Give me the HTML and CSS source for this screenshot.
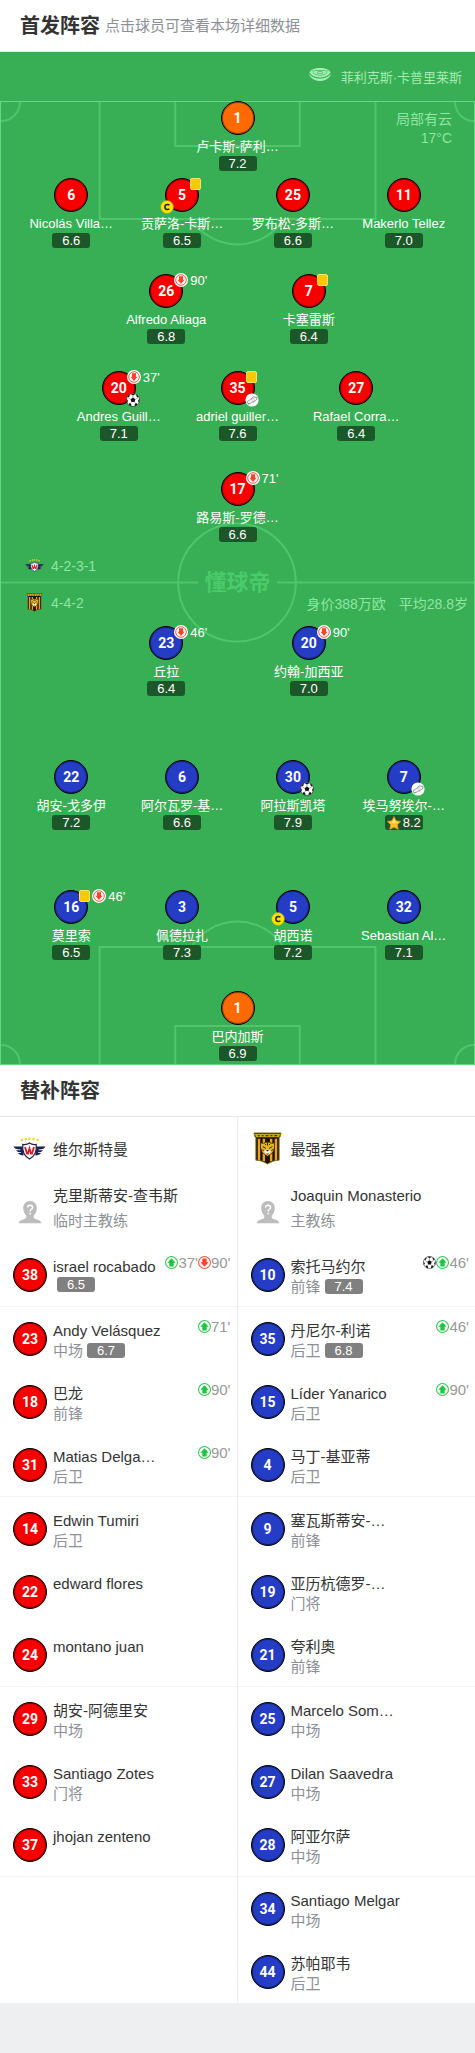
FILE: index.html
```html
<!DOCTYPE html>
<html lang="zh-CN">
<head>
    <meta charset="UTF-8">
    <meta name="viewport" content="width=device-width, initial-scale=1.0">
    <title>首发阵容</title>
    <link rel="stylesheet" href="styles.css">
</head>
<body>
    <svg class="sprite" aria-hidden="true">
        <symbol id="down" viewBox="0 0 14 14">
            <circle cx="7" cy="7" r="7" fill="#fff"/>
            <circle cx="7" cy="7" r="5.3" fill="none" stroke="#f5442d" stroke-width="0.9"/>
            <path d="M5 3.200h4v3.600h1.500L7 11 3.500 6.800H5z" fill="#f5442d"/>
        </symbol>
        <symbol id="sub-down" viewBox="0 0 12 12">
            <circle cx="6" cy="6" r="5.5" fill="#fff" stroke="#f2543f" stroke-width="1"/>
            <path d="M4 2.200h4v3.600h1.800L6 10 2.200 5.800H4z" fill="#f5442d"/>
        </symbol>
        <symbol id="sub-up" viewBox="0 0 12 12">
            <circle cx="6" cy="6" r="5.5" fill="#fff" stroke="#35c457" stroke-width="1"/>
            <path d="M4 9.800h4V6.200h1.800L6 2 2.200 6.200H4z" fill="#1fc43f"/>
        </symbol>
        <symbol id="ball" viewBox="0 0 14 14">
            <circle cx="7" cy="7" r="6.5" fill="#fff" stroke="#333" stroke-width="0.7"/>
            <path d="M7 4.500l2.400 1.800-.9 2.800h-3l-.9-2.800zM4.700.9h4.600L7 2.500zM.6 5.600L2 8.100.9 9.600zM13.400 5.600L12 8.100l1.100 1.500zM3 10.200l2 .3.500 2.700-2.500-1.200zM11 10.200l-2 .3-.5 2.700 2.500-1.200zM1.600 3.200l1.800-1.600.3 1.600-1.400 1.400zM12.400 3.200l-1.800-1.600-.3 1.600 1.400 1.400z" fill="#111"/>
            <path d="M7 2.500v2M4.600 6.300L2.300 4.800M9.400 6.300l2.300-1.500M5.500 9.100l-1 1.400M8.500 9.100l1 1.400" stroke="#444" stroke-width="0.5"/>
        </symbol>
        <symbol id="boot" viewBox="0 0 14 14">
            <circle cx="7" cy="7" r="6.6" fill="#fff"/>
            <path d="M2 9.600c.6-1.800 2.200-2 3.600-3.200C7 5.200 7.500 3.900 9 3.600c.8 1 1.700.9 2.700.4.7 1.500.3 2.700-1 3.500C8.900 8.300 7.700 8.600 6.400 9.700c-1.500 1.200-3.600 1.300-4.400-.1z" fill="#f2f2f2" stroke="#777" stroke-width="0.8"/>
            <path d="M6.400 6.300l1 1M7.500 5.200l1 1M3.500 11.300l.4.700M8.500 9.300l.4.800" stroke="#777" stroke-width="0.7"/>
        </symbol>
        <symbol id="captain" viewBox="0 0 14 14">
            <circle cx="7" cy="7" r="6.4" fill="#ffe400" stroke="#a9a111" stroke-width="0.6"/>
            <path d="M9.400 5.300C8.900 4.800 8.200 4.500 7.400 4.500 5.900 4.500 4.900 5.600 4.900 7s1 2.500 2.500 2.500c.8 0 1.500-.3 2-.8" fill="none" stroke="#222" stroke-width="1.500"/>
        </symbol>
        <symbol id="star" viewBox="0 0 14 14">
            <path d="M7 .5l2.100 4.200 4.600.7-3.300 3.300.8 4.700L7 11.200l-4.200 2.200.8-4.700L.3 5.400l4.600-.7z" fill="#ffc125" stroke="#f58f1d" stroke-width="0.6" stroke-linejoin="round"/>
            <path d="M7 2.200l1.500 3.200 3.400.5L7 7.500 2.100 5.900l3.400-.5z" fill="#ffe06b"/>
        </symbol>
        <symbol id="coach" viewBox="0 0 24 24">
            <path d="M12 1c4.200 0 6.800 3 6.800 7 0 3-1.200 5.700-3 7.400-.6 2.600.6 3.300 3.200 4.200 2.200.7 3.800 1.300 4.500 3.600H.5c.7-2.300 2.300-2.900 4.500-3.600 2.600-.9 3.800-1.600 3.200-4.200-1.800-1.700-3-4.400-3-7.400 0-4 2.600-7 6.800-7z" fill="#bdbdbd"/>
            <path d="M9.600 7.600c0-1.500 1-2.400 2.500-2.400s2.500.9 2.500 2.200c0 1.900-2.500 2-2.500 4.100" fill="none" stroke="#fff" stroke-width="1.400"/>
            <circle cx="12.100" cy="13.600" r="0.9" fill="#fff"/>
        </symbol>
        <symbol id="wilstermann" viewBox="0 0 33 22">
            <g fill="#f6d433"><circle cx="9" cy="2.600" r="1.300"/><circle cx="13" cy="1.600" r="1.300"/><circle cx="16.500" cy="1.300" r="1.300"/><circle cx="20.500" cy="1.600" r="1.300"/><circle cx="24.500" cy="2.600" r="1.300"/></g>
            <path d="M.5 9h10v9C8 18 5.800 17 5 15.500h3L8 14.800C5.500 14.800 3.500 13.800 3 12.700h4.500V12C3.500 12 1.200 11 .5 9zM32.500 9h-10v9c2.500 0 4.700-1 5.500-2.500h-3v-.7c2.500 0 4.500-1 5-2.100h-4.500V12c4 0 6.300-1 7-3z" fill="#1d2150"/>
            <path d="M16.500 5.500c2 1.500 4.500 1.800 6.700 1.400.8 7-1.700 12-6.700 14.600-5-2.600-7.500-7.600-6.700-14.600 2.200.4 4.700.1 6.700-1.400z" fill="#fff" stroke="#1d2150" stroke-width="1.200"/>
            <path d="M12 9.500l2 6.500h1l1.500-5 1.500 5h1l2-6.500" fill="none" stroke="#d3202c" stroke-width="1.900"/>
        </symbol>
        <symbol id="strongest" viewBox="0 0 30 34">
            <path d="M1 1h28l-1 4-1 1v23c-4 0-8 1.500-12 4-4-2.500-8-4-12-4V6L2 5z" fill="#161310" stroke="#8d7a25" stroke-width="1"/>
            <path d="M2 2h26l-1 3.500H3z" fill="#cda927"/>
            <path d="M5 3.700h2M9 3.700h2M13 3.700h3M18 3.700h2M22 3.700h3" stroke="#3b3110" stroke-width="1.400"/>
            <path d="M5 7h2.500v22L5 28.500zM10 7h2.500v23.500L10 29.500zM17.500 7H20v22.500l-2.500 1zM22.500 7H25v21.500l-2.500.5z" fill="#f0a11f"/>
            <path d="M8 11l2.500.8C13 10 17 10 19.500 11.800L22 11c.8 5-.5 9-2.500 11L15 25l-4.500-3C8.500 20 7.200 16 8 11z" fill="#e8b720" stroke="#2a210b" stroke-width="0.7"/>
            <path d="M10 15l3.500 2M20 15l-3.500 2M12 12l1.500 1.500M18 12l-1.500 1.500M15 11v3M9 18l2 1M21 18l-2 1" stroke="#2a210b" stroke-width="1"/>
            <path d="M11.500 19.500l3-1.500h1l3 1.500-1.500 3.500h-4z" fill="#eee"/>
            <path d="M13.500 18.500h3L15 20z" fill="#111"/>
            <path d="M13.500 22h3L15 23.700z" fill="#d6382c"/>
        </symbol>
        <symbol id="stadium" viewBox="0 0 22 13">
            <path d="M0 5.500C2 9 6 10.500 11 10.500S20 9 22 5.500c0 1-.4 2-1 2.800C18.800 11.200 15 13 11 13S3.200 11.200 1 8.300C.4 7.500 0 6.500 0 5.500z" fill="#a6f0b6"/>
            <path d="M11 0c5.500 0 9.500 1.700 10.300 4.300C20 7.600 16 9.400 11 9.400S2 7.600.7 4.300C1.500 1.700 5.500 0 11 0z" fill="#a6f0b6"/>
            <path d="M6 2.500h10l2 2c-1.500 1.800-4 2.700-7 2.700s-5.500-.9-7-2.700z" fill="none" stroke="#38af54" stroke-width="0.7"/>
            <path d="M9 3.500h4l1 1.800H8zM2.500 3.500l2-1M19.500 3.500l-2-1" fill="none" stroke="#38af54" stroke-width="0.6"/>
        </symbol>
    </svg>

    <header class="section-title">
        <h2>首发阵容</h2>
        <p>点击球员可查看本场详细数据</p>
    </header>

    <main class="pitch">
        <div class="stadium">
            <svg width="22" height="13"><use href="#stadium"/></svg>
            <span>菲利克斯·卡普里莱斯</span>
        </div>

        <div class="field">
            <svg class="lines" viewBox="0 0 475 963" preserveAspectRatio="none" aria-hidden="true">
                <g fill="none" stroke="#4fc56c" stroke-width="2">
                    <path d="M99 0v117h277V0M175 0v44h125V0"/>
                    <path d="M191 117a55 55 0 0 0 93 0"/>
                    <path d="M19 0A19 19 0 0 1 0 19M456 0a19 19 0 0 0 19 19"/>
                    <path d="M0 481h198M277 481h198"/>
                    <circle cx="237" cy="481" r="59"/>
                    <path d="M99 963V846h277v117M175 963v-38h125v38"/>
                    <path d="M191 846a55 55 0 0 1 93 0"/>
                    <path d="M19 963A19 19 0 0 0 0 944M456 963a19 19 0 0 1 19-19"/>
                </g>
            </svg>
            <span class="watermark">懂球帝</span>
            <div class="weather">局部有云<br>17°C</div>

            <div class="team home">
                <div class="line one">
                    <a class="player" href="#"><span class="shirt keeper">1</span><span class="name">卢卡斯-萨利…</span><span class="score">7.2</span></a>
                </div>
                <div class="line four">
                    <a class="player" href="#"><span class="shirt red">6</span><span class="name">Nicolás Villa…</span><span class="score">6.6</span></a>
                    <a class="player" href="#"><span class="shirt red">5<span class="events"><i class="card"></i></span><svg class="badge left"><use href="#captain"/></svg></span><span class="name">贡萨洛-卡斯…</span><span class="score">6.5</span></a>
                    <a class="player" href="#"><span class="shirt red">25</span><span class="name">罗布松-多斯…</span><span class="score">6.6</span></a>
                    <a class="player" href="#"><span class="shirt red">11</span><span class="name">Makerlo Tellez</span><span class="score">7.0</span></a>
                </div>
                <div class="line two">
                    <a class="player" href="#"><span class="shirt red">26<span class="events"><svg><use href="#down"/></svg>90'</span></span><span class="name">Alfredo Aliaga</span><span class="score">6.8</span></a>
                    <a class="player" href="#"><span class="shirt red">7<span class="events"><i class="card"></i></span></span><span class="name">卡塞雷斯</span><span class="score">6.4</span></a>
                </div>
                <div class="line three">
                    <a class="player" href="#"><span class="shirt red">20<span class="events"><svg><use href="#down"/></svg>37'</span><svg class="badge right"><use href="#ball"/></svg></span><span class="name">Andres Guill…</span><span class="score">7.1</span></a>
                    <a class="player" href="#"><span class="shirt red">35<span class="events"><i class="card"></i></span><svg class="badge right"><use href="#boot"/></svg></span><span class="name">adriel guiller…</span><span class="score">7.6</span></a>
                    <a class="player" href="#"><span class="shirt red">27</span><span class="name">Rafael Corra…</span><span class="score">6.4</span></a>
                </div>
                <div class="line one">
                    <a class="player" href="#"><span class="shirt red">17<span class="events"><svg><use href="#down"/></svg>71'</span></span><span class="name">路易斯-罗德…</span><span class="score">6.6</span></a>
                </div>
            </div>

            <div class="formations">
                <div class="formation">
                    <svg><use href="#wilstermann"/></svg>
                    <span>4-2-3-1</span>
                </div>
                <div class="formation">
                    <svg><use href="#strongest"/></svg>
                    <span>4-4-2</span>
                    <p class="value"><span>身价388万欧</span><span>平均28.8岁</span></p>
                </div>
            </div>

            <div class="team away">
                <div class="line two">
                    <a class="player" href="#"><span class="shirt blue">23<span class="events"><svg><use href="#down"/></svg>46'</span></span><span class="name">丘拉</span><span class="score">6.4</span></a>
                    <a class="player" href="#"><span class="shirt blue">20<span class="events"><svg><use href="#down"/></svg>90'</span></span><span class="name">约翰-加西亚</span><span class="score">7.0</span></a>
                </div>
                <div class="line four">
                    <a class="player" href="#"><span class="shirt blue">22</span><span class="name">胡安-戈多伊</span><span class="score">7.2</span></a>
                    <a class="player" href="#"><span class="shirt blue">6</span><span class="name">阿尔瓦罗-基…</span><span class="score">6.6</span></a>
                    <a class="player" href="#"><span class="shirt blue">30<svg class="badge right"><use href="#ball"/></svg></span><span class="name">阿拉斯凯塔</span><span class="score">7.9</span></a>
                    <a class="player" href="#"><span class="shirt blue">7<svg class="badge right"><use href="#boot"/></svg></span><span class="name">埃马努埃尔-…</span><span class="score"><svg><use href="#star"/></svg>8.2</span></a>
                </div>
                <div class="line four">
                    <a class="player" href="#"><span class="shirt blue">16<span class="events"><i class="card"></i><svg><use href="#down"/></svg>46'</span></span><span class="name">莫里索</span><span class="score">6.5</span></a>
                    <a class="player" href="#"><span class="shirt blue">3</span><span class="name">佩德拉扎</span><span class="score">7.3</span></a>
                    <a class="player" href="#"><span class="shirt blue">5<svg class="badge left"><use href="#captain"/></svg></span><span class="name">胡西诺</span><span class="score">7.2</span></a>
                    <a class="player" href="#"><span class="shirt blue">32</span><span class="name">Sebastian Al…</span><span class="score">7.1</span></a>
                </div>
                <div class="line one">
                    <a class="player" href="#"><span class="shirt keeper">1</span><span class="name">巴内加斯</span><span class="score">6.9</span></a>
                </div>
            </div>
        </div>
    </main>

    <header class="section-title">
        <h2>替补阵容</h2>
    </header>

    <section class="bench">
        <div class="side">
            <div class="club"><svg><use href="#wilstermann"/></svg><h3>维尔斯特曼</h3></div>
            <div class="coach"><svg><use href="#coach"/></svg><div><h4>克里斯蒂安-查韦斯</h4><p>临时主教练</p></div></div>
            <ul>
                <li><span class="shirt red">38</span><div class="info"><h4>israel rocabado</h4><p><span class="score">6.5</span></p></div><div class="subs"><svg><use href="#sub-up"/></svg>37'<svg><use href="#sub-down"/></svg>90'</div></li>
                <li><span class="shirt red">23</span><div class="info"><h4>Andy Velásquez</h4><p>中场<span class="score">6.7</span></p></div><div class="subs"><svg><use href="#sub-up"/></svg>71'</div></li>
                <li><span class="shirt red">18</span><div class="info"><h4>巴龙</h4><p>前锋</p></div><div class="subs"><svg><use href="#sub-up"/></svg>90'</div></li>
                <li><span class="shirt red">31</span><div class="info"><h4>Matias Delga…</h4><p>后卫</p></div><div class="subs"><svg><use href="#sub-up"/></svg>90'</div></li>
                <li><span class="shirt red">14</span><div class="info"><h4>Edwin Tumiri</h4><p>后卫</p></div></li>
                <li><span class="shirt red">22</span><div class="info"><h4>edward flores</h4></div></li>
                <li><span class="shirt red">24</span><div class="info"><h4>montano juan</h4></div></li>
                <li><span class="shirt red">29</span><div class="info"><h4>胡安-阿德里安</h4><p>中场</p></div></li>
                <li><span class="shirt red">33</span><div class="info"><h4>Santiago Zotes</h4><p>门将</p></div></li>
                <li><span class="shirt red">37</span><div class="info"><h4>jhojan zenteno</h4></div></li>
            </ul>
        </div>
        <div class="side">
            <div class="club"><svg><use href="#strongest"/></svg><h3>最强者</h3></div>
            <div class="coach"><svg><use href="#coach"/></svg><div><h4>Joaquin Monasterio</h4><p>主教练</p></div></div>
            <ul>
                <li><span class="shirt blue">10</span><div class="info"><h4>索托马约尔</h4><p>前锋<span class="score">7.4</span></p></div><div class="subs"><svg><use href="#ball"/></svg><svg><use href="#sub-up"/></svg>46'</div></li>
                <li><span class="shirt blue">35</span><div class="info"><h4>丹尼尔-利诺</h4><p>后卫<span class="score">6.8</span></p></div><div class="subs"><svg><use href="#sub-up"/></svg>46'</div></li>
                <li><span class="shirt blue">15</span><div class="info"><h4>Líder Yanarico</h4><p>后卫</p></div><div class="subs"><svg><use href="#sub-up"/></svg>90'</div></li>
                <li><span class="shirt blue">4</span><div class="info"><h4>马丁-基亚蒂</h4><p>后卫</p></div></li>
                <li><span class="shirt blue">9</span><div class="info"><h4>塞瓦斯蒂安-…</h4><p>前锋</p></div></li>
                <li><span class="shirt blue">19</span><div class="info"><h4>亚历杭德罗-…</h4><p>门将</p></div></li>
                <li><span class="shirt blue">21</span><div class="info"><h4>夸利奥</h4><p>前锋</p></div></li>
                <li><span class="shirt blue">25</span><div class="info"><h4>Marcelo Som…</h4><p>中场</p></div></li>
                <li><span class="shirt blue">27</span><div class="info"><h4>Dilan Saavedra</h4><p>中场</p></div></li>
                <li><span class="shirt blue">28</span><div class="info"><h4>阿亚尔萨</h4><p>中场</p></div></li>
                <li><span class="shirt blue">34</span><div class="info"><h4>Santiago Melgar</h4><p>中场</p></div></li>
                <li><span class="shirt blue">44</span><div class="info"><h4>苏帕耶韦</h4><p>后卫</p></div></li>
            </ul>
        </div>
    </section>
</body>
</html>
```
FILE: styles.css
```css
* {
    margin: 0;
    padding: 0;
    box-sizing: border-box;
}

body {
    background: #eeeff1;
    color: #333;
    font-family: "Liberation Sans", "Noto Sans CJK SC", sans-serif;
    font-size: 15px;
}

a {
    color: inherit;
    text-decoration: none;
}

ul {
    list-style: none;
}

h3, h4 {
    font-size: 15px;
    font-weight: normal;
}

.sprite {
    display: none;
}

.section-title {
    display: flex;
    align-items: center;
    gap: 5px;
    height: 52px;
    padding: 0 20px 3px;
    background: #fff;
    border-bottom: 1px solid #e8e9eb;
}

.section-title h2 {
    font-size: 20px;
}

.section-title p {
    color: #8c9096;
}

/* pitch */
.pitch {
    background: #38af54;
}

.stadium {
    display: flex;
    align-items: center;
    justify-content: flex-end;
    gap: 10px;
    height: 50px;
    padding-right: 13px;
    color: #a0ecb1;
    font-size: 13px;
}

.stadium svg {
    margin-bottom: 6px;
}

.stadium span {
    line-height: 20px;
    padding-top: 1px;
}

.field {
    position: relative;
}

.lines {
    position: absolute;
    top: 0;
    left: 0;
    width: 100%;
    height: 100%;
    border: 1px solid #62d983;
}

.watermark {
    position: absolute;
    top: 50%;
    left: 50%;
    transform: translate(-50%, -50%);
    padding-bottom: 6px;
    color: #4bca6a;
    font-size: 22px;
    font-weight: bold;
}

.weather {
    position: absolute;
    top: 9px;
    right: 23px;
    color: #8fe5a3;
    font-size: 14px;
    line-height: 19px;
    text-align: right;
}

.team {
    position: relative;
    display: grid;
}

.home {
    grid-template-rows: 77px 96px 97px 101px 70px;
    margin-top: -1px;
}

.away {
    grid-template-rows: 134px 130px 101px 74px;
}

.line {
    display: flex;
    justify-content: space-between;
    align-items: flex-start;
}

.one {
    justify-content: center;
}

.two {
    padding: 0 calc(35% - 50px);
}

.three {
    padding: 0 calc(25% - 50px);
}

.four {
    padding: 0 calc(15% - 50px);
}

.player {
    display: flex;
    flex-direction: column;
    align-items: center;
    width: 100px;
    color: #fff;
    font-size: 13px;
}

.shirt {
    position: relative;
    display: flex;
    align-items: center;
    justify-content: center;
    flex-shrink: 0;
    width: 34px;
    height: 34px;
    border: 1px solid #000;
    border-radius: 50%;
    box-shadow: inset 0 0 0 1px rgba(0, 0, 0, 0.4);
    color: #fff;
    font-family: Roboto, sans-serif;
    font-size: 14px;
    font-weight: bold;
}

.red {
    background: #f60000;
}

.blue {
    background: #253cc4;
}

.keeper {
    background: #ff6a00;
}

.events {
    position: absolute;
    top: -2px;
    left: 24px;
    display: flex;
    align-items: center;
    gap: 2px;
    height: 14px;
    font-family: "Liberation Sans", sans-serif;
    font-size: 13px;
    font-weight: normal;
}

.events svg {
    flex-shrink: 0;
    width: 14px;
    height: 14px;
}

.card {
    flex-shrink: 0;
    width: 11px;
    height: 12px;
    background: #ffc800;
    border: 1px solid #ffdf70;
    border-radius: 2px;
}

.badge {
    position: absolute;
    top: 21px;
    width: 14px;
    height: 14px;
}

.badge.left {
    left: -6px;
}

.badge.right {
    left: 23px;
}

.name {
    height: 21px;
    line-height: 24px;
    white-space: nowrap;
}

.score {
    display: inline-flex;
    align-items: center;
    justify-content: center;
    gap: 2px;
    width: 38px;
    height: 15px;
    background: #1c572a;
    border-radius: 3px;
    color: #fff;
    font-size: 13px;
    line-height: 15px;
}

.score svg {
    width: 14px;
    height: 14px;
}

.formations {
    position: relative;
    padding: 5px 0;
    color: #8fe5a3;
    font-size: 14px;
}

.formation {
    display: flex;
    align-items: center;
    gap: 7px;
    height: 37px;
    padding: 0 7px 0 25px;
}

.formation svg {
    width: 19px;
    height: 19px;
}

.value {
    display: flex;
    gap: 13px;
    margin-left: auto;
}

/* bench */
.bench {
    display: grid;
    grid-template-columns: 1fr 1fr;
    background: #fff;
}

.side:first-child {
    border-right: 1px solid #ebebed;
}

.club {
    display: flex;
    align-items: center;
    gap: 7px;
    height: 63px;
    padding-left: 13px;
}

.club svg {
    width: 33px;
    height: 33px;
}

.coach {
    display: flex;
    align-items: center;
    gap: 11px;
    height: 63px;
    padding-left: 18px;
    line-height: 25px;
}

.coach svg {
    width: 24px;
    height: 24px;
}

.coach div {
    padding-bottom: 8px;
}

.side p {
    color: #8c9096;
}

.side li {
    display: flex;
    align-items: center;
    gap: 6px;
    height: 63px;
    padding: 0 6px 0 13px;
}

.side li:nth-child(3n+1) {
    height: 64px;
    border-bottom: 1px solid #f3f4f5;
}

.info {
    height: 36px;
    line-height: 20px;
}

.info p {
    display: flex;
    align-items: center;
}

.info .score {
    margin-left: 4px;
    background: #808080;
}

.subs {
    display: flex;
    align-items: center;
    align-self: flex-start;
    height: 18px;
    margin: 10px 0 0 auto;
    color: #999;
}

.subs svg {
    width: 13px;
    height: 13px;
}
```
